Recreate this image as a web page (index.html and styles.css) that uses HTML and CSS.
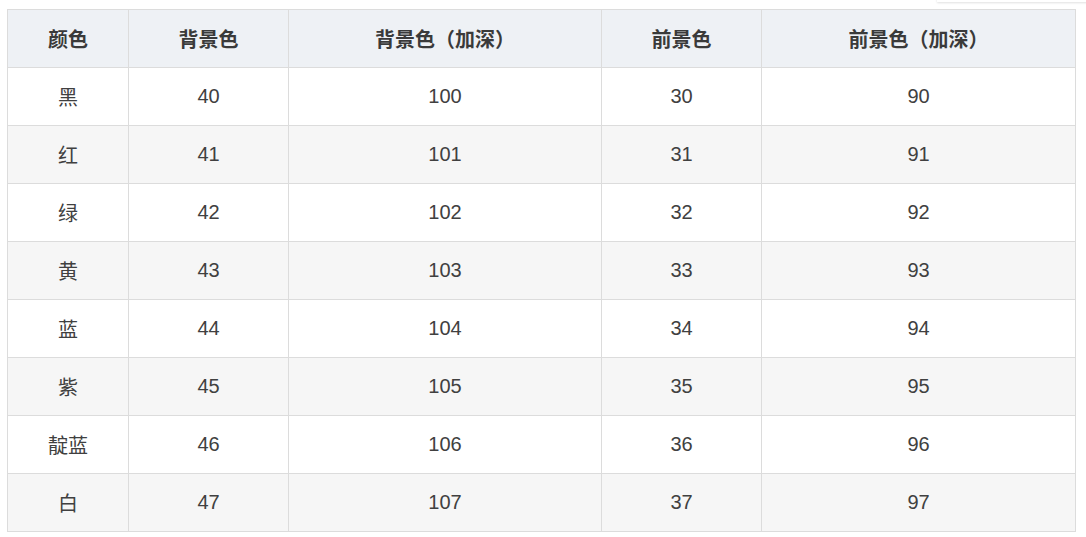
FILE: index.html
```html
<!DOCTYPE html>
<html lang="zh-CN">
<head>
<meta charset="utf-8">
<title>颜色</title>
<link rel="stylesheet" href="styles.css">
</head>
<body>
<div class="corner-shadow"></div>
<table class="colors">
  <colgroup>
    <col class="c1"><col class="c2"><col class="c3"><col class="c4"><col class="c5">
  </colgroup>
  <thead>
    <tr><th>颜色</th><th>背景色</th><th>背景色（加深）</th><th>前景色</th><th>前景色（加深）</th></tr>
  </thead>
  <tbody>
    <tr><td>黑</td><td>40</td><td>100</td><td>30</td><td>90</td></tr>
    <tr><td>红</td><td>41</td><td>101</td><td>31</td><td>91</td></tr>
    <tr><td>绿</td><td>42</td><td>102</td><td>32</td><td>92</td></tr>
    <tr><td>黄</td><td>43</td><td>103</td><td>33</td><td>93</td></tr>
    <tr><td>蓝</td><td>44</td><td>104</td><td>34</td><td>94</td></tr>
    <tr><td>紫</td><td>45</td><td>105</td><td>35</td><td>95</td></tr>
    <tr><td>靛蓝</td><td>46</td><td>106</td><td>36</td><td>96</td></tr>
    <tr><td>白</td><td>47</td><td>107</td><td>37</td><td>97</td></tr>
  </tbody>
</table>
</body>
</html>
```
FILE: styles.css
```css
html, body {
  margin: 0;
  background: #ffffff;
}
body {
  padding: 9px 0 0 7px;
  font-family: "Liberation Sans", "Noto Sans CJK SC", sans-serif;
  color: #404040;
  font-size: 20px;
}
.corner-shadow {
  position: absolute;
  top: -20px;
  left: 937px;
  width: 160px;
  height: 22px;
  background: #fff;
  box-shadow: 0 1px 2px rgba(0,0,0,0.12);
}
.colors {
  border-collapse: collapse;
  table-layout: fixed;
  width: 1068px;
}
.c1 { width: 121px; }
.c2 { width: 160px; }
.c3 { width: 313px; }
.c4 { width: 160px; }
.c5 { width: 314px; }
.colors th,
.colors td {
  border: 1px solid #dcdcdc;
  height: 58px;
  padding: 0;
  text-align: center;
  vertical-align: middle;
  box-sizing: border-box;
}
.colors th {
  background: #eef1f5;
  font-weight: bold;
  color: #3a3a3a;
}
.colors tbody tr:nth-child(even) td {
  background: #f6f6f6;
}
```
